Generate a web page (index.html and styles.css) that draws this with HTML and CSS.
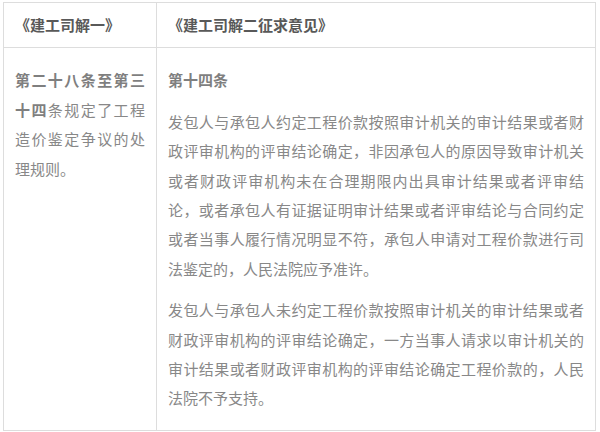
FILE: index.html
```html
<!DOCTYPE html>
<html lang="zh-CN">
<head>
<meta charset="utf-8">
<link rel="stylesheet" href="styles.css">
</head>
<body>
<div class="table">
  <div class="cell head left">《建工司解一》</div>
  <div class="cell head right">《建工司解二征求意见》</div>
  <div class="cell body left">
    <p><b>第二十八条至第三十四</b>条规定了工程造价鉴定争议的处理规则。</p>
  </div>
  <div class="cell body right">
    <p><b>第十四条</b></p>
    <p>发包人与承包人约定工程价款按照审计机关的审计结果或者财政评审机构的评审结论确定，非因承包人的原因导致审计机关或者财政评审机构未在合理期限内出具审计结果或者评审结论，或者承包人有证据证明审计结果或者评审结论与合同约定或者当事人履行情况明显不符，承包人申请对工程价款进行司法鉴定的，人民法院应予准许。</p>
    <p>发包人与承包人未约定工程价款按照审计机关的审计结果或者财政评审机构的评审结论确定，一方当事人请求以审计机关的审计结果或者财政评审机构的评审结论确定工程价款的，人民法院不予支持。</p>
  </div>
</div>
</body>
</html>
```

FILE: styles.css
```css
html, body {
  margin: 0;
  padding: 0;
  background: #ffffff;
}

body {
  font-family: "Noto Sans CJK SC", "Noto Sans", sans-serif;
  font-size: 15px;
  line-height: 29.4px;
  color: #888888;
}

.table {
  margin: 2px 0 0 3px;
  width: 593px;
  box-sizing: border-box;
  border: 1px solid #dddddd;
  display: grid;
  grid-template-columns: 153px 438px;
}

.cell {
  box-sizing: border-box;
  padding: 5px 11px;
  text-align: justify;
}

.cell.left {
  border-right: 1px solid #dddddd;
}

.cell.head {
  border-bottom: 1px solid #dddddd;
  padding-top: 7px;
  padding-bottom: 8px;
  font-weight: bold;
  color: #595959;
}

.cell p {
  margin: 12px 0;
}

.cell b {
  font-weight: bold;
  color: #7f7f7f;
}
```
